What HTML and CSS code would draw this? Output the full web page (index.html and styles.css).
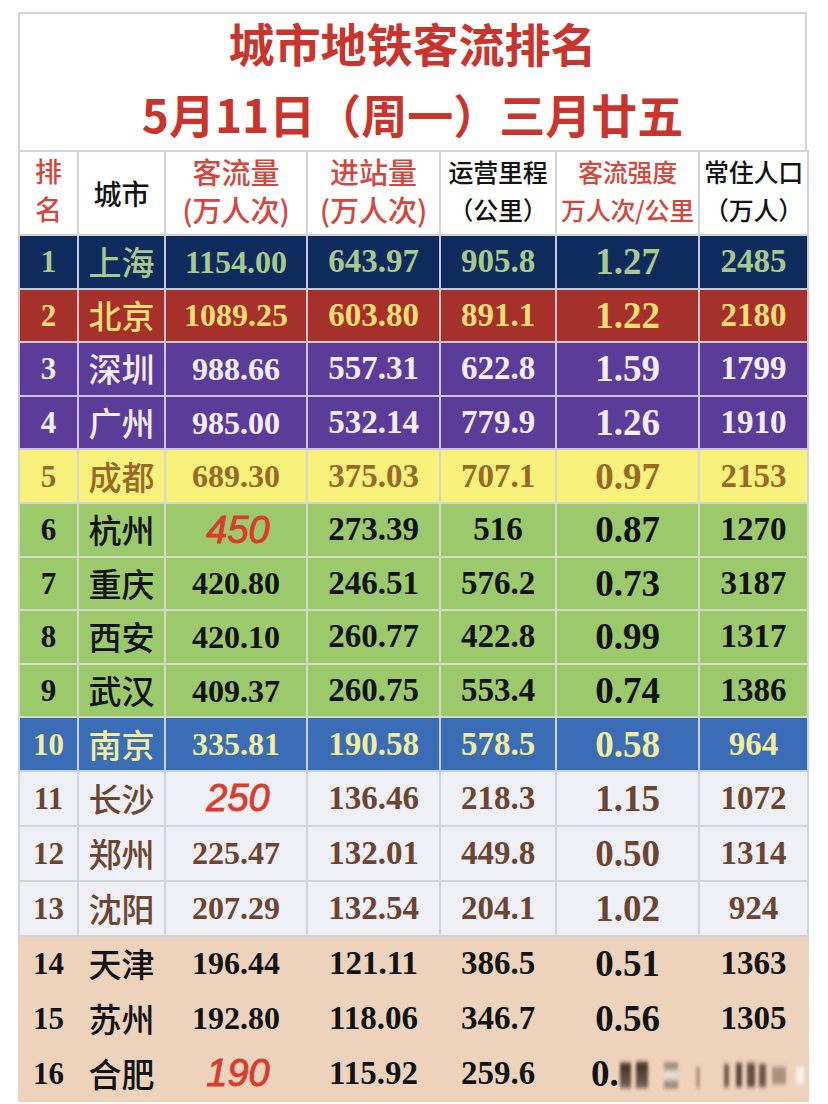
FILE: index.html
```html
<!DOCTYPE html>
<html lang="zh-CN">
<head>
<meta charset="utf-8">
<title>城市地铁客流排名</title>
<link rel="stylesheet" href="styles.css">
</head>
<body>
<div class="sheet">
  <div class="title">
    <div class="t1">城市地铁客流排名</div>
    <div class="t2">5月11日（周一）三月廿五</div>
  </div>
  <table class="rank">
    <colgroup>
      <col class="w-rank"><col class="w-city"><col class="w-flow"><col class="w-in"><col class="w-len"><col class="w-int"><col class="w-pop">
    </colgroup>
    <thead>
      <tr>
        <th class="red h-rank">排<br>名</th>
        <th class="h-city">城市</th>
        <th class="red h-big">客流量<br>(万人次)</th>
        <th class="red h-big">进站量<br>(万人次)</th>
        <th class="h-sm">运营里程<br>（公里）</th>
        <th class="red h-sm">客流强度<br>万人次/公里</th>
        <th class="h-sm">常住人口<br>（万人）</th>
      </tr>
    </thead>
    <tbody>
      <tr class="navy"><td>1</td><td class="city">上海</td><td>1154.00</td><td>643.97</td><td>905.8</td><td>1.27</td><td>2485</td></tr>
      <tr class="crimson"><td>2</td><td class="city">北京</td><td>1089.25</td><td>603.80</td><td>891.1</td><td>1.22</td><td>2180</td></tr>
      <tr class="purple"><td>3</td><td class="city">深圳</td><td>988.66</td><td>557.31</td><td>622.8</td><td>1.59</td><td>1799</td></tr>
      <tr class="purple"><td>4</td><td class="city">广州</td><td>985.00</td><td>532.14</td><td>779.9</td><td>1.26</td><td>1910</td></tr>
      <tr class="yellow"><td>5</td><td class="city">成都</td><td>689.30</td><td>375.03</td><td>707.1</td><td>0.97</td><td>2153</td></tr>
      <tr class="green"><td>6</td><td class="city">杭州</td><td class="est">450</td><td>273.39</td><td>516</td><td>0.87</td><td>1270</td></tr>
      <tr class="green"><td>7</td><td class="city">重庆</td><td>420.80</td><td>246.51</td><td>576.2</td><td>0.73</td><td>3187</td></tr>
      <tr class="green"><td>8</td><td class="city">西安</td><td>420.10</td><td>260.77</td><td>422.8</td><td>0.99</td><td>1317</td></tr>
      <tr class="green"><td>9</td><td class="city">武汉</td><td>409.37</td><td>260.75</td><td>553.4</td><td>0.74</td><td>1386</td></tr>
      <tr class="blue"><td>10</td><td class="city">南京</td><td>335.81</td><td>190.58</td><td>578.5</td><td>0.58</td><td>964</td></tr>
      <tr class="grey"><td>11</td><td class="city">长沙</td><td class="est">250</td><td>136.46</td><td>218.3</td><td>1.15</td><td>1072</td></tr>
      <tr class="grey"><td>12</td><td class="city">郑州</td><td>225.47</td><td>132.01</td><td>449.8</td><td>0.50</td><td>1314</td></tr>
      <tr class="grey"><td>13</td><td class="city">沈阳</td><td>207.29</td><td>132.54</td><td>204.1</td><td>1.02</td><td>924</td></tr>
      <tr class="peach"><td>14</td><td class="city">天津</td><td>196.44</td><td>121.11</td><td>386.5</td><td>0.51</td><td>1363</td></tr>
      <tr class="peach"><td>15</td><td class="city">苏州</td><td>192.80</td><td>118.06</td><td>346.7</td><td>0.56</td><td>1305</td></tr>
      <tr class="peach"><td>16</td><td class="city">合肥</td><td class="est">190</td><td>115.92</td><td>259.6</td><td class="obscured">0.<span class="ghost">71</span></td><td class="obscured"><span class="ghost">1111</span></td></tr>
    </tbody>
  </table>
  <svg class="smudge" width="200" height="34" viewBox="0 0 200 34" aria-hidden="true">
    <defs>
      <filter id="bl" x="-20%" y="-20%" width="140%" height="140%"><feGaussianBlur stdDeviation="1.4 2.2"/></filter>
      <linearGradient id="dk" x1="0" y1="0" x2="0" y2="1">
        <stop offset="0" stop-color="#3a2418" stop-opacity="0.95"/>
        <stop offset="1" stop-color="#2a1810" stop-opacity="0.6"/>
      </linearGradient>
      <linearGradient id="lt" x1="0" y1="0" x2="0" y2="1">
        <stop offset="0" stop-color="#5a3a28" stop-opacity="0.7"/>
        <stop offset="0.5" stop-color="#fff8f0" stop-opacity="0.9"/>
        <stop offset="1" stop-color="#3a2418" stop-opacity="0.6"/>
      </linearGradient>
    </defs>
    <g filter="url(#bl)">
      <rect x="8" y="5" width="11" height="25" fill="url(#dk)"/>
      <rect x="24" y="4" width="12" height="26" fill="url(#dk)"/>
      <rect x="52" y="5" width="14" height="25" fill="url(#lt)"/>
      <rect x="84" y="9" width="4" height="21" fill="#7a5a48" opacity="0.5"/>
      <rect x="112" y="6" width="5" height="23" fill="#4a3020" opacity="0.7"/>
      <rect x="124" y="5" width="6" height="24" fill="#3a2418" opacity="0.8"/>
      <rect x="135" y="5" width="8" height="24" fill="#3a2418" opacity="0.75"/>
      <rect x="147" y="6" width="7" height="23" fill="#3a2418" opacity="0.7"/>
      <rect x="160" y="9" width="14" height="17" fill="#5a4038" opacity="0.45"/>
      <rect x="184" y="9" width="8" height="17" fill="#ffffff" opacity="0.7"/>
    </g>
  </svg>
</div>
</body>
</html>
```
FILE: styles.css
```css
html, body {
  margin: 0;
  padding: 0;
  background: #ffffff;
}

.sheet {
  position: relative;
  width: 789px;
  margin: 12px 0 0 18px;
}

.title {
  box-sizing: border-box;
  height: 138px;
  border: 2px solid #d3d3da;
  border-bottom: none;
  color: #c9352d;
  font-family: "Noto Sans CJK SC", "Noto Sans", sans-serif;
  font-weight: 700;
  font-size: 46px;
  text-align: center;
}

.t1 {
  line-height: 56px;
}

.t2 {
  line-height: 72px;
  margin-top: 7px;
}

.rank {
  width: 789px;
  border-collapse: collapse;
  table-layout: fixed;
}

.w-rank { width: 59px; }
.w-city { width: 87px; }
.w-flow { width: 142px; }
.w-in   { width: 133px; }
.w-len  { width: 116px; }
.w-int  { width: 143px; }
.w-pop  { width: 109px; }

.rank th {
  height: 82px;
  padding: 0;
  border: 2px solid #d3d3dd;
  background: #ffffff;
  color: #141414;
  font-family: "Noto Sans CJK SC", "Noto Sans", sans-serif;
  font-weight: 500;
  text-align: center;
  vertical-align: top;
  white-space: nowrap;
  line-height: 38px;
}

.rank th.red {
  color: #d4473c;
}

.h-rank { font-size: 27px; }
.rank th.h-city { font-size: 28px; vertical-align: middle; line-height: 30px; }
.h-big  { font-size: 29px; }
.h-sm   { font-size: 25px; letter-spacing: -0.3px; }

.rank td {
  height: 51.6px;
  padding: 0;
  border: 2px solid #cdcde0;
  text-align: center;
  font-family: "Liberation Serif", "Times New Roman", serif;
  font-weight: 700;
  font-size: 33px;
  line-height: 1;
  white-space: nowrap;
}

.rank td:nth-child(1) { font-size: 31px; }
.rank td:nth-child(3) { font-size: 32px; }
.rank td:nth-child(6) { font-size: 37px; }

.rank td.city {
  font-family: "Noto Sans CJK SC", "Noto Sans", sans-serif;
  font-weight: 500;
  font-size: 33px;
}

.rank td.est {
  font-family: "Liberation Sans", Arial, sans-serif;
  font-style: italic;
  font-weight: 400;
  font-size: 38px;
  color: #d93b2c;
  padding-left: 4px;
  -webkit-text-stroke: 0.9px #d93b2c;
}

/* row themes */
.navy td    { background: #0f2b5e; color: #a7c98d; border-color: #c6c8dc; }
.crimson td { background: #a6312a; color: #f7df76; border-color: #d8c4cc; }
.purple td  { background: #5b3d99; color: #f4eefb; border-color: #cbc4e2; }
.yellow td  { background: #f8f27c; color: #9a6928; border-color: #d8d8d0; }
.green td   { background: #9bc96b; color: #121212; border-color: #d4dcc8; }
.blue td    { background: #3b6db6; color: #f1ee9e; border-color: #c8d0e6; }
.grey td    { background: #eff0f5; color: #6c4531; border-color: #d2d3df; height: 53px; }
.peach td   { background: #edd2bc; color: #121212; border-color: #edd2bc; height: 53px; }

.peach td + td {
  border-left-color: #eed6c3;
}

.ghost {
  color: transparent;
}

.rank td.obscured {
  text-align: left;
  padding-left: 34px;
}

.rank td.obscured:last-child {
  padding-left: 0;
}

.smudge {
  position: absolute;
  left: 594px;
  bottom: 10px;
}
```
